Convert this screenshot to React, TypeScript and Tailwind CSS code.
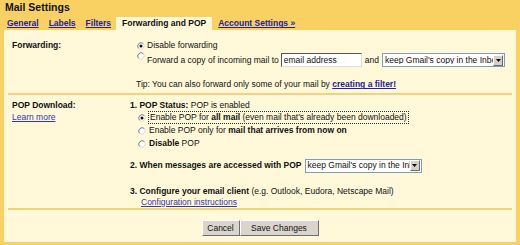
import React from "react";

function Radio({ checked = false }: { checked?: boolean }) {
  return (
    <svg width="8" height="8" viewBox="0 0 8 8" className="shrink-0">
      <circle cx="4" cy="4" r="3.4" fill="#ffffff" />
      <path d="M1.6 6.4 A3.4 3.4 0 0 1 6.4 1.6" stroke="#7a7a7a" strokeWidth="1" fill="none" />
      <path d="M6.4 1.6 A3.4 3.4 0 0 1 1.6 6.4" stroke="#d8d8d8" strokeWidth="1" fill="none" />
      {checked && <circle cx="4" cy="4" r="1.5" fill="#111" />}
    </svg>
  );
}

function Select({ width }: { width: string }) {
  return (
    <div className={`${width} h-[14px] bg-white border border-[#7f9db9] flex items-center overflow-hidden`}>
      <span className="flex-1 pl-[2px] whitespace-nowrap overflow-hidden text-[8.5px] text-[#111]">keep Gmail's copy in the Inbox</span>
      <div className="w-[10px] h-[11px] mr-[1px] bg-[#d4d0c8] border-t border-l border-t-white border-l-white border-b border-r border-b-[#6b6b6b] border-r-[#6b6b6b] flex items-center justify-center shrink-0">
        <svg width="5" height="3" viewBox="0 0 5 3"><path d="M0 0 H5 L2.5 3 Z" fill="#000" /></svg>
      </div>
    </div>
  );
}

export default function App() {
  return (
    <div className="w-[520px] h-[245px] bg-[#f9d163] flex flex-col font-['Liberation_Sans',Arial,sans-serif] text-[8.5px] text-[#111] leading-none overflow-hidden">
      <div className="h-[17px] pl-[5px] pt-[2px] text-[10.5px] font-bold text-[#111]">Mail Settings</div>
      <div className="flex h-[13px] items-stretch pl-[2px] font-bold">
        <div className="px-[5px] flex items-center text-[#22229c] underline">General</div>
        <div className="px-[5px] flex items-center text-[#22229c] underline">Labels</div>
        <div className="px-[5px] flex items-center text-[#22229c] underline">Filters</div>
        <div className="px-[6px] flex items-center bg-[#fff8d9] text-[#111]">Forwarding and POP</div>
        <div className="px-[6px] flex items-center text-[#22229c] underline">Account Settings »</div>
      </div>
      <div className="mx-[4px] h-[212px] bg-[#fff8d9] flex flex-col pt-[9px]">
        {/* Forwarding section */}
        <div className="flex">
          <div className="w-[126px] pl-[8px] shrink-0">
            <div className="h-[13px] flex items-center font-bold">Forwarding:</div>
          </div>
          <div className="flex flex-col pl-[7px]">
            <div className="h-[13px] flex items-center gap-[2px]">
              <Radio checked />
              <span>Disable forwarding</span>
            </div>
            <div className="h-[16px] flex items-center">
              <div className="self-start"><Radio /></div>
              <span className="ml-[2px]">Forward a copy of incoming mail to</span>
              <div className="ml-[2px] w-[81px] h-[14px] bg-white border border-t-[#555] border-l-[#555] border-b-[#ddd] border-r-[#ddd] flex items-center pl-[2px]">email address</div>
              <span className="ml-[3px] mr-[3px]">and</span>
              <Select width="w-[123px]" />
            </div>
            <div className="h-[10px]" />
            <div className="h-[13px] flex items-center -ml-[1px]">
              <span>Tip: You can also forward only some of your mail by&nbsp;</span>
              <span className="font-bold text-[#22229c] underline">creating a filter!</span>
            </div>
          </div>
        </div>
        <div className="mx-[4px] mt-[2px] h-[2px] bg-[#f3d27c]" />
        {/* POP section */}
        <div className="flex pt-[4px]">
          <div className="w-[126px] pl-[8px] shrink-0">
            <div className="h-[12px] flex items-center font-bold">POP Download:</div>
            <div className="h-[13px] flex items-center text-[#3434b4] underline">Learn more</div>
          </div>
          <div className="flex flex-col">
            <div className="h-[12px] flex items-center">
              <span className="font-bold">1. POP Status:</span>
              <span>&nbsp;POP is enabled</span>
            </div>
            <div className="h-[13px] flex items-center pl-[8px] gap-[2px]">
              <Radio checked />
              <span className="border border-dotted border-[#333] px-[1px] py-[1px]">Enable POP for <b>all mail</b> (even mail that's already been downloaded)</span>
            </div>
            <div className="h-[13px] flex items-center pl-[8px] gap-[3px]">
              <Radio />
              <span>Enable POP only for <b>mail that arrives from now on</b></span>
            </div>
            <div className="h-[13px] flex items-center pl-[8px] gap-[3px]">
              <Radio />
              <span><b>Disable</b> POP</span>
            </div>
            <div className="h-[8px]" />
            <div className="h-[15px] flex items-center">
              <span className="font-bold">2. When messages are accessed with POP</span>
              <div className="ml-[3px]"><Select width="w-[117px]" /></div>
            </div>
            <div className="h-[13px]" />
            <div className="h-[11px] flex items-center">
              <span className="font-bold">3. Configure your email client</span>
              <span>&nbsp;(e.g. Outlook, Eudora, Netscape Mail)</span>
            </div>
            <div className="h-[10px] flex items-center pl-[11px] text-[#3434b4] underline">Configuration instructions</div>
          </div>
        </div>
        <div className="mx-[4px] mt-[1px] h-[2px] bg-[#f3d27c]" />
        <div className="flex justify-center pt-[10px]">
          <div className="flex">
            <div className="w-[38px] h-[16px] bg-[#d9d5cc] border border-t-white border-l-white border-b-[#6e6e6e] border-r-[#6e6e6e] flex items-center justify-center">Cancel</div>
            <div className="w-[79px] h-[16px] bg-[#d9d5cc] border border-t-white border-l-white border-b-[#6e6e6e] border-r-[#6e6e6e] flex items-center justify-center">Save Changes</div>
          </div>
        </div>
      </div>
    </div>
  );
}
